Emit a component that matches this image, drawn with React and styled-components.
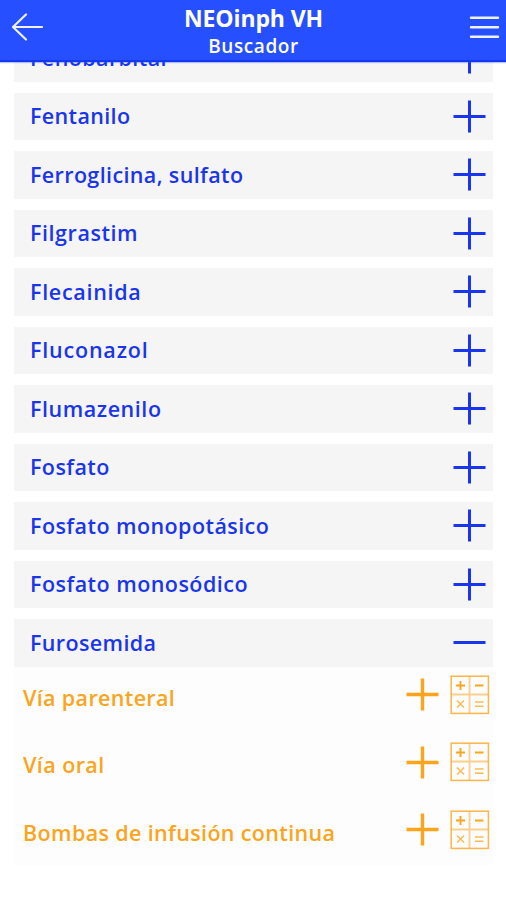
import React, { useState } from 'react';
import styled, { createGlobalStyle } from 'styled-components';

const GlobalStyle = createGlobalStyle`
  * {
    box-sizing: border-box;
  }

  body {
    margin: 0;
    background-color: white;
    font-family: 'Open Sans', 'Noto Sans', sans-serif;
  }

  button {
    border: none;
    background: none;
    font: inherit;
    cursor: pointer;
  }
`;

const Screen = styled.div`
  height: 900px;
  overflow: hidden;
`;

const Header = styled.header`
  position: relative;
  z-index: 1;
  display: flex;
  align-items: center;
  height: 62px;
  padding: 0 6px 7px 11px;
  color: white;
  background-color: #264fff;
  border-bottom: 2px solid #1238f0;
  box-shadow: 0 1px 1px rgba(38, 79, 255, 0.35);
`;

const HeaderButton = styled.button`
  display: flex;
  padding: 0;
  color: #eef1ff;
`;

const Titles = styled.div`
  flex: 1;
  display: flex;
  flex-direction: column;
  align-items: center;
  padding: 10px 5px 0 0;
`;

const Title = styled.h1`
  margin: 0;
  font-size: 23px;
  line-height: 28px;
  font-weight: 700;
  letter-spacing: -0.1px;
`;

const Subtitle = styled.h2`
  margin: 0;
  font-size: 19px;
  line-height: 28px;
  font-weight: 600;
  letter-spacing: 0.6px;
`;

const List = styled.main`
  display: flex;
  flex-direction: column;
  gap: 11px;
  margin-top: -28px;
  padding: 0 13px 0 14px;
`;

const DrugRow = styled.button`
  display: flex;
  align-items: center;
  justify-content: space-between;
  width: 100%;
  height: 47.5px;
  padding: 0 7px 0 16px;
  color: #1a35ee;
  background-color: #f5f5f5;
`;

const Label = styled.span`
  font-size: 21.5px;
  line-height: 28px;
  font-weight: 600;
  white-space: nowrap;
  letter-spacing: ${({ $tracking }) => $tracking || 0}px;
`;

const Panel = styled.div`
  background-color: #fdfdfd;
`;

const RouteRow = styled.div`
  display: flex;
  align-items: flex-start;
  height: 67.5px;
  padding: 8px 3px 0 9px;
  color: #fba41c;

  &:last-child {
    height: 63px;
  }
`;

const RouteName = styled.div`
  flex: 1;
  padding-top: 9px;
`;

const RouteAction = styled.button`
  display: flex;
  align-items: center;
  height: 40px;
  padding: 0;
  margin-left: ${({ $gap }) => $gap || 0}px;
  color: inherit;
`;

const drugs = [
  { name: 'Fenobarbital', tracking: 0.4 },
  { name: 'Fentanilo', tracking: 0.35 },
  { name: 'Ferroglicina, sulfato', tracking: 0.37 },
  { name: 'Filgrastim', tracking: 0.55 },
  { name: 'Flecainida', tracking: 0.7 },
  { name: 'Fluconazol', tracking: 0.8 },
  { name: 'Flumazenilo', tracking: 0.55 },
  { name: 'Fosfato', tracking: 0.4 },
  { name: 'Fosfato monopotásico', tracking: 0.43 },
  { name: 'Fosfato monosódico', tracking: 0.46 },
  {
    name: 'Furosemida',
    tracking: 0.37,
    routes: [
      { name: 'Vía parenteral', tracking: 0.35 },
      { name: 'Vía oral', tracking: 0.42 },
      { name: 'Bombas de infusión continua', tracking: 0.36 },
    ],
  },
];

const BackIcon = () => (
  <svg width="32" height="28" viewBox="0 0 32 28" fill="none" stroke="currentColor" strokeWidth="2.2" strokeLinecap="round" strokeLinejoin="round">
    <path d="M31 14H2M15 1.5L2 14L15 26.5" />
  </svg>
);

const MenuIcon = () => (
  <svg width="31" height="24" viewBox="0 0 31 24" fill="none" stroke="currentColor" strokeWidth="2.4" strokeLinecap="round">
    <path d="M2 2.8H29M2 12.3H29M2 21.8H29" />
  </svg>
);

const ToggleIcon = ({ open, strokeWidth = 3 }) => (
  <svg width="33" height="33" viewBox="0 0 33 33" fill="none" stroke="currentColor" strokeWidth={strokeWidth}>
    <path d={open ? 'M0.5 16.5H32.5' : 'M0.5 16.5H32.5M16.5 0.5V32.5'} />
  </svg>
);

const CalculatorIcon = () => (
  <svg width="40" height="40" viewBox="0 0 40 40" fill="none" stroke="currentColor">
    <rect x="1.2" y="1.2" width="37.2" height="37.2" strokeWidth="1.5" opacity="0.8" />
    <path d="M19.5 1.5V38M1.5 19.5H38" strokeWidth="1.8" opacity="0.5" />
    <path d="M6 10.5H15M10.5 6V15M25 10.5H33.5" strokeWidth="1.9" />
    <path d="M7 25.5L14 32.5M14 25.5L7 32.5M25 27H33.5M25 31.2H33.5" strokeWidth="1.5" opacity="0.75" />
  </svg>
);

const DrugItem = ({ drug, open, onToggle }) => (
  <div>
    <DrugRow onClick={onToggle}>
      <Label $tracking={drug.tracking}>{drug.name}</Label>
      <ToggleIcon open={open} />
    </DrugRow>
    {open && drug.routes && (
      <Panel>
        {drug.routes.map((route) => (
          <RouteRow key={route.name}>
            <RouteName>
              <Label $tracking={route.tracking}>{route.name}</Label>
            </RouteName>
            <RouteAction><ToggleIcon strokeWidth={3.4} /></RouteAction>
            <RouteAction $gap={11}><CalculatorIcon /></RouteAction>
          </RouteRow>
        ))}
      </Panel>
    )}
  </div>
);

const App = () => {
  const [openName, setOpenName] = useState('Furosemida');

  return (
    <Screen>
      <GlobalStyle />
      <Header>
        <HeaderButton><BackIcon /></HeaderButton>
        <Titles>
          <Title>NEOinph VH</Title>
          <Subtitle>Buscador</Subtitle>
        </Titles>
        <HeaderButton><MenuIcon /></HeaderButton>
      </Header>
      <List>
        {drugs.map((drug) => (
          <DrugItem
            key={drug.name}
            drug={drug}
            open={openName === drug.name}
            onToggle={() => setOpenName(openName === drug.name ? null : drug.name)}
          />
        ))}
      </List>
    </Screen>
  );
};

export default App;
